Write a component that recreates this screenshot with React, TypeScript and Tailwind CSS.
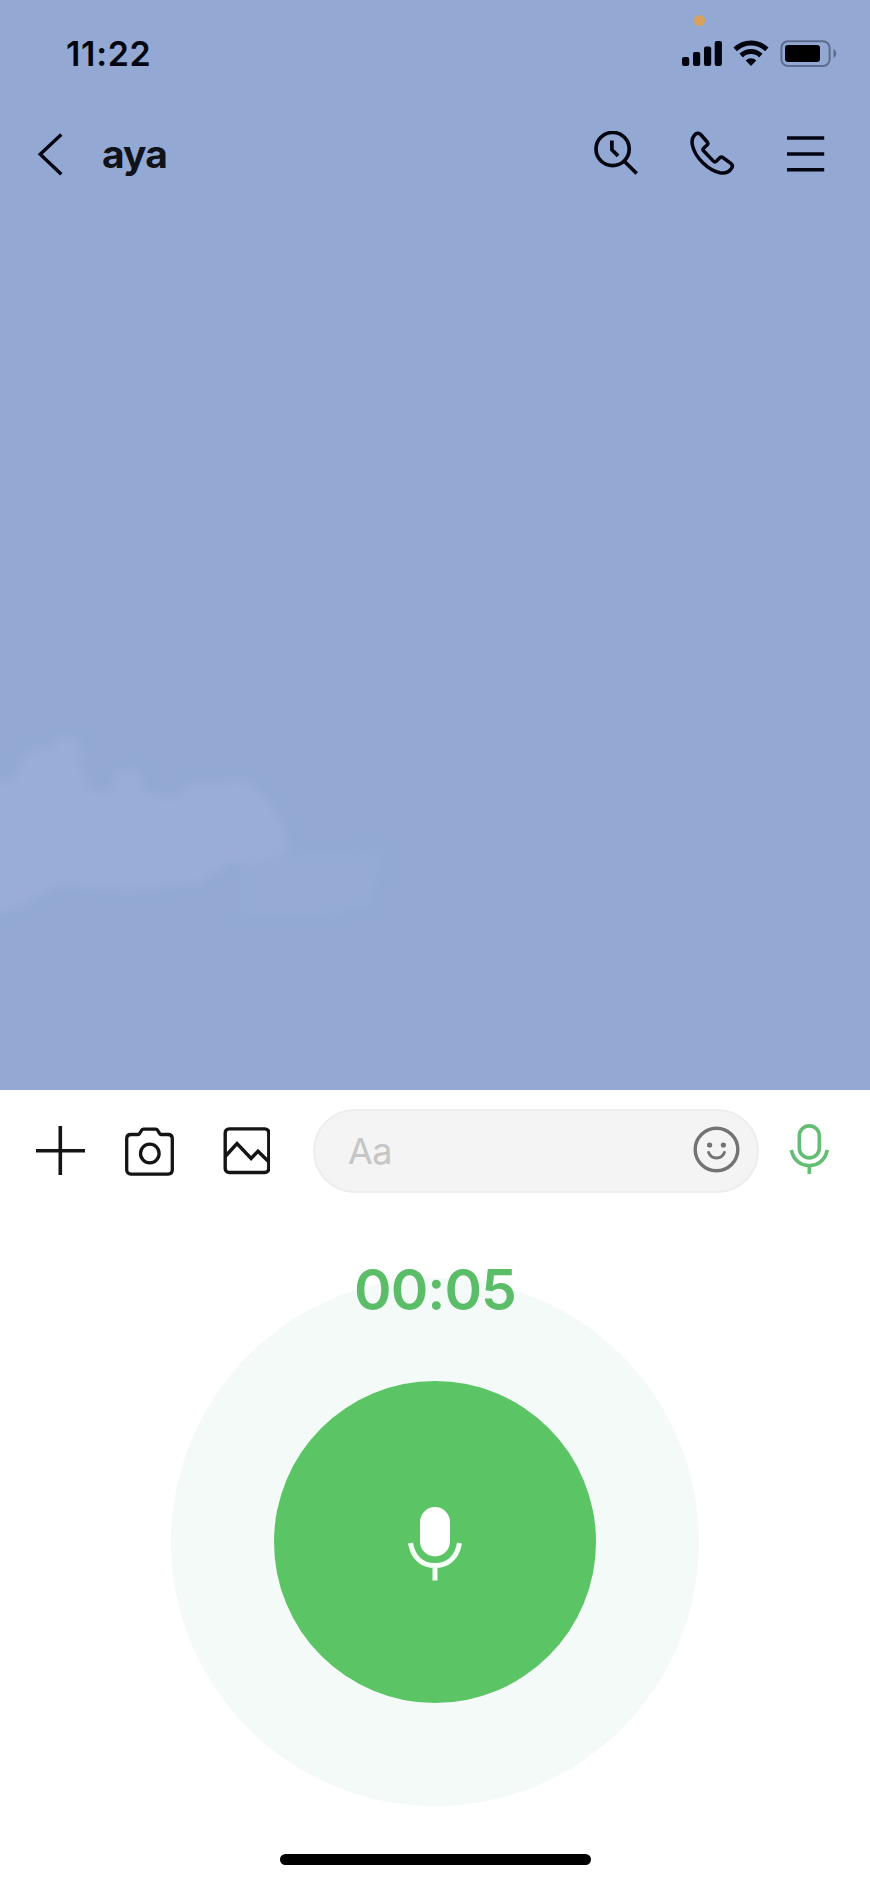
import React from "react";

const StatusBar = () => {
  return (
    <div className="relative flex h-[108px] items-start justify-between pl-[66px] pr-[33px]">
      <span className="mt-[33px] text-[34px] font-semibold leading-[41px] tracking-[0.7px] text-[#04060f]">
        11:22
      </span>
      <span className="absolute left-[694px] top-[15px] h-[11px] w-[11px] rounded-full bg-[#d6a25c]" />
      <div className="mt-10 flex items-start">
        <svg width="41" height="27" viewBox="0 0 41 27" fill="#020510">
          <rect x="0" y="17" width="7.2" height="9" rx="2" />
          <rect x="11" y="12" width="7.2" height="14" rx="2" />
          <rect x="22" y="6.5" width="7.2" height="19.5" rx="2" />
          <rect x="32.7" y="1" width="7.2" height="25" rx="2" />
        </svg>
        <svg
          className="ml-[10px]"
          width="36"
          height="27"
          viewBox="0 0 36 27"
          fill="none"
          stroke="#020510"
          strokeWidth="5"
        >
          <path d="M2.2 9.4a22.5 22.5 0 0 1 31.6 0" />
          <path d="M8.2 15.6a14 14 0 0 1 19.6 0" />
          <path
            d="M18 26l-5.3-5.6a7.6 7.6 0 0 1 10.6 0z"
            fill="#020510"
            stroke="none"
          />
        </svg>
        <svg className="ml-[10px]" width="58" height="27" viewBox="0 0 58 27">
          <rect
            x="2.4"
            y="1.3"
            width="48.2"
            height="24.6"
            rx="6.5"
            fill="none"
            stroke="#5d6c8c"
            strokeWidth="2"
          />
          <rect x="6" y="5" width="35" height="17" rx="3" fill="#000" />
          <path d="M54.5 9c3.6 1.4 3.6 7.6 0 9z" fill="#5d6c8c" />
        </svg>
      </div>
    </div>
  );
};

const ChatHeader = () => {
  return (
    <header className="flex h-[92px] items-center pl-[37px] pr-[45px]">
      <svg
        width="26"
        height="44"
        viewBox="0 0 26 44"
        fill="none"
        stroke="#020510"
        strokeWidth="3.4"
      >
        <path d="M24.3 2.5L3.2 22.3l21.1 20" />
      </svg>
      <h1 className="ml-[39px] text-[39px] font-bold leading-[48px] tracking-[-0.9px] text-[#10131a]">
        aya
      </h1>
      <div className="ml-auto flex items-center text-[#020510]">
        <svg
          width="46"
          height="46"
          viewBox="0 0 46 46"
          fill="none"
          stroke="currentColor"
          strokeWidth="3.7"
        >
          <circle cx="19.6" cy="18" r="16.6" />
          <path d="M18.9 9.5v9.300l6.200 6.100M31 30l12.700 12.500" />
        </svg>
        <svg
          className="ml-[51px]"
          width="46"
          height="46"
          viewBox="0 0 46 46"
          fill="none"
          stroke="currentColor"
          strokeWidth="3.5"
          strokeLinejoin="round"
        >
          <path d="M4.200 4.500C6.300 2 8.700 1.600 10.700 3.500l6.500 7.500c1 1.200 1 2-.1 3l-3.500 3.200c-.9.900-.9 1.700-.1 2.600l9.900 10.300c1 1 2 1.100 2.900.1l3.500-3.500c1-1 1.900-1 3-.2l8 5.800c1.900 1.500 2.100 3 .8 5-2.400 3.700-6.300 5.400-11.700 4.500C18.500 39.500 5 26.500 2.500 14.500c-.9-4.300-.3-7.800 1.700-10z" />
        </svg>
        <svg
          className="ml-[51px]"
          width="38"
          height="38"
          viewBox="0 0 38 38"
          stroke="currentColor"
          strokeWidth="3.6"
        >
          <path d="M0 3h37.200M0 19h37.200M0 34.800h37.200" />
        </svg>
      </div>
    </header>
  );
};

// faint cloud near the bottom left of the wallpaper
const Cloud = () => {
  return (
    <svg
      className="absolute left-0 top-[700px]"
      width="420"
      height="260"
      viewBox="0 0 420 260"
    >
      <defs>
        <filter
          id="cloudSoft"
          x="-10%"
          y="-10%"
          width="120%"
          height="120%"
          colorInterpolationFilters="sRGB"
        >
          <feGaussianBlur stdDeviation="5" />
        </filter>
      </defs>
      <g filter="url(#cloudSoft)">
        <path
          d="M240 160L310 154 382 148 372 206 310 218 240 218z"
          fill="#95abd5"
        />
        <path
          d="M-30 82L12 81 24 58 38 48 52 48 62 37 76 39 82 52 80 68 92 92 106 94 114 84 116 72 138 70 144 92 172 100 192 84 246 82 264 96 280 120 290 150 262 160 232 162 198 182 130 190 60 184 24 204-30 222z"
          fill="#9aadd8"
        />
      </g>
    </svg>
  );
};

const MessageBar = () => {
  return (
    <div className="flex h-[121px] items-center pl-9 pr-10 text-[#141414]">
      <svg
        width="49"
        height="49"
        viewBox="0 0 49 49"
        stroke="currentColor"
        strokeWidth="3.6"
      >
        <path d="M24.300 0v49M0 24.800h49" />
      </svg>
      <svg
        className="ml-10 mt-px"
        width="49"
        height="49"
        viewBox="0 0 49 49"
        fill="none"
        stroke="currentColor"
        strokeWidth="3.3"
        strokeLinejoin="round"
      >
        <path d="M6 7.500h7.200c.6 0 1-.3 1.300-.8l2.300-3.700c.4-.6.9-.9 1.600-.9h12.400c.7 0 1.200.3 1.600.9l2.300 3.700c.3.500.7.800 1.300.8H43c2.600 0 4.300 1.700 4.300 4.300v31c0 2.600-1.700 4.300-4.300 4.300H6c-2.600 0-4.300-1.700-4.300-4.300v-31c0-2.600 1.700-4.300 4.300-4.300z" />
        <circle cx="24.8" cy="26.500" r="9.300" />
      </svg>
      <svg
        className="ml-12 mt-px"
        width="48"
        height="48"
        viewBox="0 0 48 48"
        fill="none"
        stroke="currentColor"
        strokeWidth="3.4"
      >
        <rect x="3.2" y="1.900" width="43.600" height="43.600" rx="4" />
        <path d="M3.200 29.500L15 16.500l14.100 15 6.900-7.300L46.500 34.500" />
      </svg>
      <div className="ml-[43px] flex h-[84px] w-[446px] items-center justify-between rounded-full border-2 border-[#ededed] bg-[#f4f4f4] pl-[33px] pr-[17px]">
        <span className="text-[36px] leading-none tracking-[-0.5px] text-[#c6c6c6]">
          Aa
        </span>
        <svg
          className="-mt-[3px]"
          width="47"
          height="47"
          viewBox="0 0 47 47"
          fill="none"
          stroke="#737373"
          strokeWidth="3.4"
        >
          <circle cx="23.500" cy="23.500" r="21.300" />
          <path
            d="M15.600 26.500c3 7.300 12.800 7.300 15.800 0"
            strokeLinecap="round"
            strokeWidth="3"
          />
          <circle cx="16.600" cy="19" r="2.600" fill="#737373" stroke="none" />
          <circle cx="30.400" cy="19" r="2.600" fill="#737373" stroke="none" />
        </svg>
      </div>
      <svg
        className="-mt-[3px] ml-[30px]"
        width="40"
        height="51"
        viewBox="0 0 40 51"
        fill="none"
        stroke="#63bd72"
        strokeWidth="3.6"
      >
        <rect x="10.300" y="1.900" width="20" height="32" rx="10" />
        <path d="M2.300 26c2.200 10.200 9.400 15.600 18 15.600S36.100 36.200 38.300 26M20.300 41.600v8.300" />
      </svg>
    </div>
  );
};

const VoiceRecorder = () => {
  return (
    <section className="flex flex-col items-center">
      <span className="relative z-10 mt-[45px] h-[68px] text-[57px] font-semibold leading-[68px] tracking-[-1px] text-[#5cbd69]">
        00:05
      </span>
      <div className="-mt-[46px] flex h-[528px] w-[528px] items-center justify-center rounded-full bg-[#f3faf7]">
        <button className="flex h-[322px] w-[322px] items-center justify-center rounded-full bg-[#5bc464]">
          <svg
            className="mt-[3px]"
            width="54"
            height="74"
            viewBox="0 0 54 74"
            fill="none"
          >
            <rect x="12" y="0" width="30" height="49.500" rx="15" fill="#fff" />
            <path
              d="M2.500 36C5 51.500 15 58.500 27 58.500S49 51.500 51.500 36M27 58v15.500"
              stroke="#f4fff5"
              strokeWidth="5"
            />
          </svg>
        </button>
      </div>
      <div className="mt-12 h-[11px] w-[311px] rounded-full bg-black" />
    </section>
  );
};

const App = () => {
  return (
    <main className="h-[1884px] w-[870px] overflow-hidden bg-white font-['Inter',sans-serif]">
      <div className="relative h-[1090px] bg-[#93a9d4]">
        <Cloud />
        <StatusBar />
        <ChatHeader />
      </div>
      <MessageBar />
      <VoiceRecorder />
    </main>
  );
};

export default App;
